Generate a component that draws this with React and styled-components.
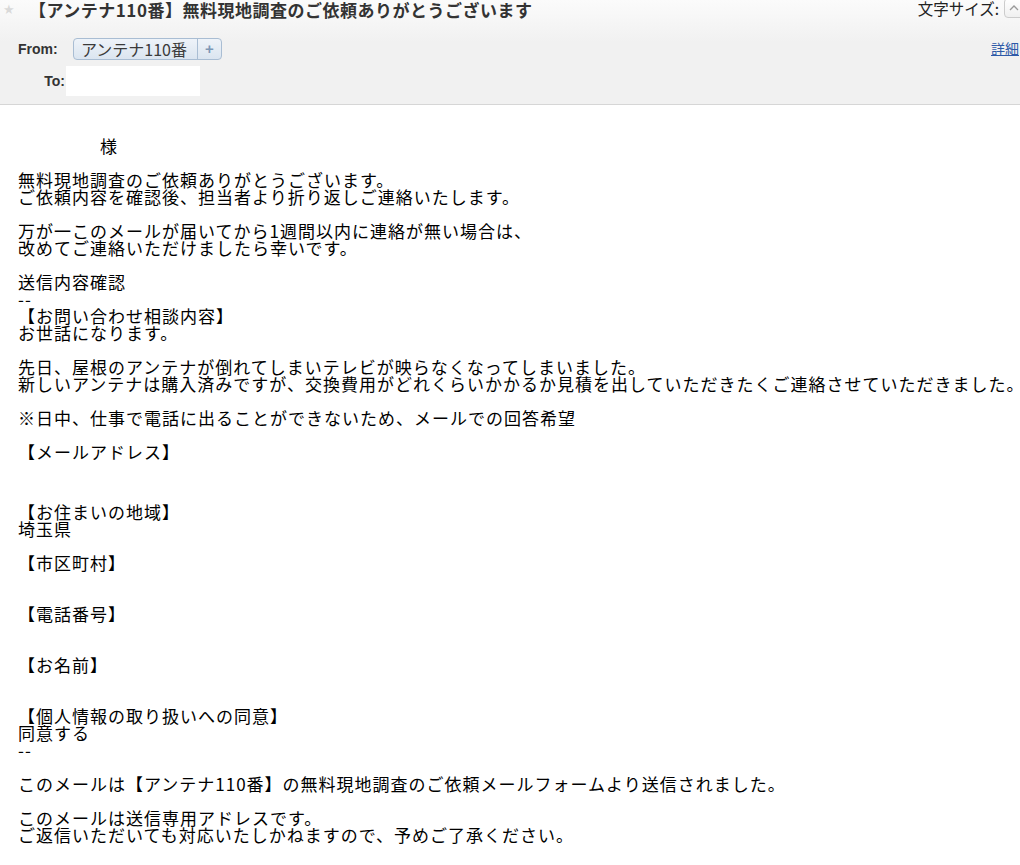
import React from 'react'
import styled, { createGlobalStyle } from 'styled-components'

const GlobalStyle = createGlobalStyle`
  html, body {
    margin: 0;
    padding: 0;
    background: #ffffff;
  }
  body {
    width: 1020px;
    overflow: hidden;
    font-family: 'Noto Sans CJK JP', 'Liberation Sans', sans-serif;
    color: #000000;
  }
`

const bodyLines = [
  { text: '様', indent: true },
  { text: '' },
  { text: '無料現地調査のご依頼ありがとうございます。' },
  { text: 'ご依頼内容を確認後、担当者より折り返しご連絡いたします。' },
  { text: '' },
  { text: '万が一このメールが届いてから1週間以内に連絡が無い場合は、' },
  { text: '改めてご連絡いただけましたら幸いです。' },
  { text: '' },
  { text: '送信内容確認' },
  { text: '--' },
  { text: '【お問い合わせ相談内容】' },
  { text: 'お世話になります。' },
  { text: '' },
  { text: '先日、屋根のアンテナが倒れてしまいテレビが映らなくなってしまいました。' },
  { text: '新しいアンテナは購入済みですが、交換費用がどれくらいかかるか見積を出していただきたくご連絡させていただきました。' },
  { text: '' },
  { text: '※日中、仕事で電話に出ることができないため、メールでの回答希望' },
  { text: '' },
  { text: '【メールアドレス】' },
  { text: '' },
  { text: '', tall: true },
  { text: '【お住まいの地域】' },
  { text: '埼玉県' },
  { text: '' },
  { text: '【市区町村】' },
  { text: '' },
  { text: '' },
  { text: '【電話番号】' },
  { text: '' },
  { text: '' },
  { text: '【お名前】' },
  { text: '' },
  { text: '' },
  { text: '【個人情報の取り扱いへの同意】' },
  { text: '同意する' },
  { text: '--' },
  { text: '' },
  { text: 'このメールは【アンテナ110番】の無料現地調査のご依頼メールフォームより送信されました。' },
  { text: '' },
  { text: 'このメールは送信専用アドレスです。' },
  { text: 'ご返信いただいても対応いたしかねますので、予めご了承ください。' }
]

const App = () => {
  return (
    <>
      <GlobalStyle />
      <Page>
        <Header>
          <TitleRow>
            <TitleLeft>
              <Star>★</Star>
              <Subject>【アンテナ110番】無料現地調査のご依頼ありがとうございます</Subject>
            </TitleLeft>
            <FontSize>
              <span>文字サイズ:</span>
              <SizeButton>
                <svg width="10" height="8" viewBox="0 0 10 8">
                  <path d="M1 6 L5 2 L9 6" fill="none" stroke="#999" strokeWidth="1.3" />
                </svg>
              </SizeButton>
            </FontSize>
          </TitleRow>
          <MetaArea>
            <MetaList>
              <MetaRow>
                <Label>From:</Label>
                <Sender>
                  <SenderName>アンテナ110番</SenderName>
                  <SenderAdd>+</SenderAdd>
                </Sender>
              </MetaRow>
              <MetaRow $to>
                <Label $right>To:</Label>
                <Recipient />
              </MetaRow>
            </MetaList>
            <DetailLink href="#">詳細</DetailLink>
          </MetaArea>
        </Header>
        <MailBody>
          {bodyLines.map((line, i) => (
            <Line key={i} $tall={line.tall} $indent={line.indent}>
              {line.text}
            </Line>
          ))}
        </MailBody>
      </Page>
    </>
  )
}

const Page = styled('div')`
  width: 1020px;
  min-height: 865px;
  background: #ffffff;
  overflow: hidden;
`

const Header = styled('div')`
  box-sizing: border-box;
  height: 105px;
  background: linear-gradient(#fbfbfb, #f1f1f1 40%);
  border-bottom: 1px solid #d6d6d6;
`

const TitleRow = styled('div')`
  display: flex;
  justify-content: space-between;
  align-items: flex-start;
  height: 24px;
`

const TitleLeft = styled('div')`
  display: flex;
  align-items: center;
  height: 20px;
`

const Star = styled('span')`
  width: 14px;
  margin-left: 3px;
  color: #d9d9d9;
  font-size: 13px;
  line-height: 20px;
  font-family: 'DejaVu Sans', sans-serif;
`

const Subject = styled('h1')`
  margin: 0 0 0 12px;
  font-size: 17px;
  font-weight: 700;
  color: #333333;
  line-height: 20px;
  letter-spacing: 0.5px;
  white-space: nowrap;
`

const FontSize = styled('div')`
  display: flex;
  align-items: flex-start;
  gap: 5px;
  margin: -1px -16px 0 0;
  font-size: 15.5px;
  color: #222222;
  line-height: 18px;
  white-space: nowrap;
`

const SizeButton = styled('div')`
  width: 32px;
  height: 20px;
  box-sizing: border-box;
  margin-top: -1px;
  padding-left: 4px;
  border: 1px solid #cccccc;
  border-radius: 4px;
  background: linear-gradient(#ffffff, #f0f0f0);
  display: flex;
  align-items: center;
`

const MetaArea = styled('div')`
  display: flex;
  justify-content: space-between;
  align-items: flex-start;
`

const MetaList = styled('div')`
  display: flex;
  flex-direction: column;
  gap: 6px;
  padding-top: 14px;
`

const MetaRow = styled('div')`
  display: flex;
  align-items: center;
  height: ${p => (p.$to ? '30px' : '22px')};
`

const Label = styled('span')`
  flex-shrink: 0;
  box-sizing: border-box;
  width: ${p => (p.$right ? '66px' : '73px')};
  padding: ${p => (p.$right ? '0 1px 0 0' : '0 0 0 18px')};
  text-align: ${p => (p.$right ? 'right' : 'left')};
  font-family: 'Liberation Sans', sans-serif;
  font-weight: 700;
  font-size: 14px;
  color: #333333;
`

const Sender = styled('div')`
  display: flex;
  height: 22px;
  box-sizing: border-box;
  border: 1px solid #a9bdd3;
  border-radius: 4px;
  background: linear-gradient(#eef3f9, #dbe5f0);
  overflow: hidden;
`

const SenderName = styled('span')`
  box-sizing: border-box;
  width: 124px;
  padding-left: 7px;
  font-size: 16px;
  line-height: 20px;
  color: #3a3a3a;
  border-right: 1px solid #a9bdd3;
  white-space: nowrap;
`

const SenderAdd = styled('span')`
  width: 23px;
  text-align: center;
  font-family: 'Liberation Sans', sans-serif;
  font-weight: 700;
  font-size: 15px;
  line-height: 19px;
  color: #7d97b5;
`

const Recipient = styled('div')`
  width: 134px;
  height: 30px;
  background: #ffffff;
`

const DetailLink = styled('a')`
  margin-top: 15px;
  margin-right: 1px;
  font-size: 14px;
  line-height: 18px;
  color: #2e5aa8;
  text-decoration: underline;
  white-space: nowrap;
`

const MailBody = styled('div')`
  padding: 32px 0 0 18px;
  font-size: 17px;
  letter-spacing: 1px;
`

const Line = styled('div')`
  height: ${p => (p.$tall ? '26px' : '17px')};
  padding-left: ${p => (p.$indent ? '82px' : '0')};
  line-height: 17px;
  white-space: pre;
`

export default App
